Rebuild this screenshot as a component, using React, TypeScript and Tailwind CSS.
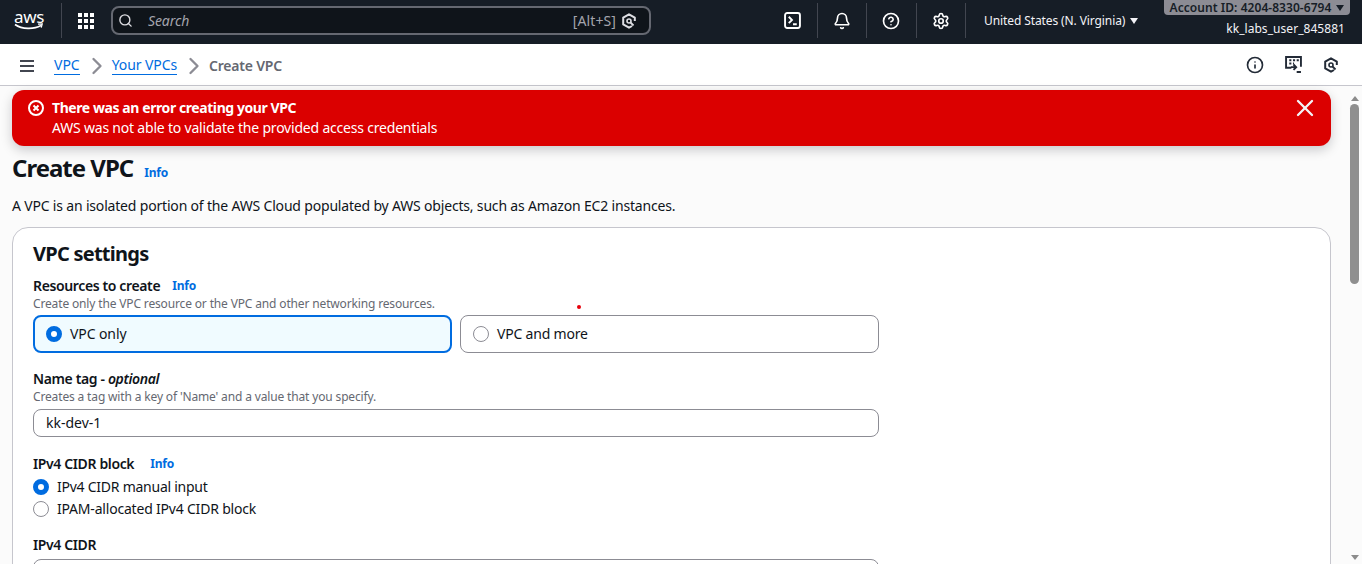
import { Bell, ChevronRight, CircleHelp, Info, Search, Settings, X } from 'lucide-react';

function QIcon({ className }: { className?: string }) {
  return (
    <svg viewBox="0 0 16 16" fill="none" stroke="currentColor" strokeWidth="2" className={className} aria-hidden>
      <path d="M13.8 8V4.6L8 1.3 2.2 4.6v6.8L8 14.7l3-1.7" strokeLinejoin="round" />
      <circle cx="8" cy="8" r="2" strokeWidth="1.6" />
      <path d="M9.5 9.5 12.5 12.5" strokeWidth="1.8" />
    </svg>
  );
}

function InfoLink({ className = '' }: { className?: string }) {
  return <span className={`text-xs font-bold tracking-[-0.2px] text-[#006ce0] ${className}`}>Info</span>;
}

function Radio({ checked = false }: { checked?: boolean }) {
  return checked ? (
    <span className="h-4 w-4 shrink-0 rounded-full border-[5px] border-[#006ce0] bg-white" />
  ) : (
    <span className="h-4 w-4 shrink-0 rounded-full border border-[#8c8c94] bg-white" />
  );
}

function TopIcon({ children, border = true }: { children: React.ReactNode; border?: boolean }) {
  return (
    <div className={`flex h-[35px] w-[49.5px] items-center justify-center ${border ? 'border-r border-[#424650]' : ''}`}>
      {children}
    </div>
  );
}

function TopBar() {
  return (
    <header className="relative flex h-11 shrink-0 items-center bg-[#161d26] pb-[3px] text-white">
      <div className="flex w-[61px] flex-col items-center pr-[3px]">
        <span className="mt-[-2px] text-[17px] leading-[15px] tracking-[-0.3px]">aws</span>
        <svg viewBox="0 0 30 8" className="mt-[-1px] h-2 w-[30px]" fill="none" stroke="white" aria-hidden>
          <path d="M1 1.5c7 5 19 5 26 1" strokeWidth="1.6" />
          <path d="M24 1.2 28.2 1l-1 3.6" strokeWidth="1.3" />
        </svg>
      </div>
      <div className="h-[35px] w-px bg-[#424650]" />
      <div className="ml-4 grid grid-cols-3 gap-[2px]">
        {Array.from({ length: 9 }).map((_, i) => (
          <span key={i} className="h-[4px] w-[4px] bg-white" />
        ))}
      </div>
      <div className="ml-[17px] flex h-[29px] w-[540px] items-center rounded-lg border-2 border-[#656871] bg-[#0f141a] pl-[5px] pr-[12px]">
        <Search className="h-[15px] w-[15px] text-[#dedee3]" strokeWidth={2.2} />
        <span className="ml-[15px] text-sm italic tracking-[-0.1px] text-[#a4a4ad]">Search</span>
        <span className="ml-auto text-sm tracking-[0.1px] text-[#a4a4ad]">[Alt+S]</span>
        <QIcon className="ml-[5px] h-4 w-4 text-[#dedee3]" />
      </div>
      <div className="ml-[117px] flex items-center">
        <TopIcon>
          <svg viewBox="0 0 16 16" className="h-[17px] w-[17px]" fill="none" stroke="white" strokeWidth="1.8" aria-hidden>
            <rect x="1" y="1" width="14" height="14" rx="2" />
            <path d="M4.5 4.5 7.5 7.5l-3 3M8.5 11.5H12" />
          </svg>
        </TopIcon>
        <TopIcon>
          <Bell className="h-[18px] w-[18px]" strokeWidth={2.2} />
        </TopIcon>
        <TopIcon>
          <CircleHelp className="h-[18px] w-[18px]" strokeWidth={2.2} />
        </TopIcon>
        <TopIcon>
          <Settings className="h-[18px] w-[18px]" strokeWidth={2.2} />
        </TopIcon>
      </div>
      <div className="ml-[18px] flex items-center text-xs tracking-[-0.1px] text-[#f3f3f7]">
        <span>United States (N. Virginia)</span>
        <span className="ml-[5px] h-0 w-0 border-x-[4.5px] border-t-[6px] border-x-transparent border-t-[#f3f3f7]" />
      </div>
      <div className="absolute right-[12px] top-0 flex h-[15px] w-[186px] items-center justify-center rounded-b bg-[#8c8c94] pt-px text-xs font-semibold leading-[12px] tracking-[0.05px] text-[#161d26]">
        Account ID: 4204-8330-6794
        <span className="ml-[5px] h-0 w-0 border-x-[4.5px] border-t-[6px] border-x-transparent border-t-[#161d26]" />
      </div>
      <span className="absolute right-[17px] top-[21px] text-xs tracking-[0.05px] text-[#f3f3f7]">kk_labs_user_845881</span>
    </header>
  );
}

function BreadcrumbBar() {
  return (
    <div className="flex h-[42px] shrink-0 items-center border-b border-[#c6c6cd] bg-white pl-5 pr-[23px] pt-[2px]">
      <svg viewBox="0 0 14 12" className="h-3 w-[14px]" fill="#424650" aria-hidden>
        <path d="M0 0h14v2H0zM0 5h14v2H0zM0 10h14v2H0z" />
      </svg>
      <span className="ml-5 border-b border-[#006ce0] text-sm leading-[18px] text-[#006ce0]">VPC</span>
      <ChevronRight className="ml-[3px] mr-[1px] h-7 w-7 text-[#8c8c94]" strokeWidth={2} />
      <span className="border-b border-[#006ce0] text-sm leading-[18px] tracking-[-0.1px] text-[#006ce0]">Your VPCs</span>
      <ChevronRight className="ml-[3px] mr-[1px] h-7 w-7 text-[#8c8c94]" strokeWidth={2} />
      <span className="text-sm font-semibold tracking-[-0.2px] text-[#656871]">Create VPC</span>
      <div className="ml-auto mt-[-2px] flex items-center gap-[21px] text-[#232b37]">
        <Info className="h-[18px] w-[18px]" strokeWidth={2.2} />
        <svg viewBox="0 0 16 16" className="h-[17px] w-[17px]" fill="none" stroke="currentColor" strokeWidth="1.8" aria-hidden>
          <path d="M6 11H1V1h14v9" />
          <path d="M4 4h2M7.5 4h2M11 4h2M4 7h2M7.5 7h1" />
          <path d="M5.5 10.5H10M8 8l2.5 2.5L8 13M11 15h4" />
        </svg>
        <QIcon className="h-4 w-4" />
      </div>
    </div>
  );
}

function ErrorFlash() {
  return (
    <div className="flex h-14 items-start rounded-xl bg-[#db0000] pl-4 pr-3 pt-2 text-sm leading-5 text-white shadow-[0_4px_12px_rgba(0,7,22,0.2)]">
      <svg viewBox="0 0 16 16" className="mt-[2px] h-4 w-4 shrink-0" fill="none" stroke="white" strokeWidth="2" aria-hidden>
        <circle cx="8" cy="8" r="7" />
        <path d="m5.5 5.5 5 5M10.5 5.5l-5 5" />
      </svg>
      <div className="ml-2">
        <div className="font-bold tracking-[-0.42px]">There was an error creating your VPC</div>
        <div className="tracking-[-0.2px]">AWS was not able to validate the provided access credentials</div>
      </div>
      <X className="ml-auto mt-[-4px] h-7 w-7 text-[#f3f3f7]" strokeWidth={2} />
    </div>
  );
}

function Label({ children }: { children: React.ReactNode }) {
  return <div className="text-sm font-semibold leading-5 tracking-[-0.37px] text-[#0f141a]">{children}</div>;
}

function Hint({ children }: { children: React.ReactNode }) {
  return <div className="text-xs leading-4 tracking-[-0.15px] text-[#656871]">{children}</div>;
}

function SettingsCard() {
  return (
    <section className="mt-[11px] h-[400px] rounded-t-2xl border border-[#c6c6cd] bg-white px-5 pt-[14px] text-[#0f141a]">
      <h2 className="text-xl font-bold leading-6 tracking-[-0.75px]">VPC settings</h2>

      <div className="mt-[10px] flex items-center gap-3">
        <Label>Resources to create</Label>
        <InfoLink />
      </div>
      <Hint>Create only the VPC resource or the VPC and other networking resources.</Hint>
      <div className="relative mt-[3px] grid w-[846px] grid-cols-2 gap-2">
        <div className="flex h-[38px] items-center gap-2 rounded-lg border-2 border-[#006ce0] bg-[#f0fbff] pl-[11px] text-sm">
          <Radio checked />
          <span className="tracking-[-0.1px]">VPC only</span>
        </div>
        <div className="flex h-[38px] items-center gap-2 rounded-lg border border-[#8c8c94] pl-[12px] text-sm">
          <Radio />
          <span className="tracking-[-0.2px]">VPC and more</span>
        </div>
        <span className="absolute left-[544px] top-[-10px] h-[4px] w-[4px] rounded-full bg-[#e7000b]" />
      </div>

      <div className="mt-4">
        <Label>
          Name tag - <em>optional</em>
        </Label>
      </div>
      <Hint>Creates a tag with a key of 'Name' and a value that you specify.</Hint>
      <div className="mt-1 flex h-7 w-[846px] items-center rounded-lg border border-[#8c8c94] pl-3 text-sm">kk-dev-1</div>

      <div className="mt-[17px] flex items-center gap-4">
        <Label>IPv4 CIDR block</Label>
        <InfoLink />
      </div>
      <div className="mt-[2px] flex h-[22px] items-center gap-2 text-sm tracking-[-0.25px]">
        <Radio checked />
        <span>IPv4 CIDR manual input</span>
      </div>
      <div className="flex h-[22px] items-center gap-2 text-sm tracking-[-0.2px]">
        <Radio />
        <span>IPAM-allocated IPv4 CIDR block</span>
      </div>

      <div className="mt-[15px]">
        <Label>IPv4 CIDR</Label>
      </div>
      <div className="mt-1 h-7 w-[846px] rounded-lg border border-[#8c8c94]" />
    </section>
  );
}

function Scrollbar() {
  return (
    <div className="flex w-[15px] shrink-0 flex-col items-center bg-[#fbfbfb] pt-[10px]">
      <span className="h-0 w-0 border-x-[4px] border-b-[5px] border-x-transparent border-b-[#8c8c8c]" />
      <span className="mt-[3px] h-[180px] w-[9px] rounded-full bg-[#8f8f8f]" />
      <span className="mt-auto mb-1 h-0 w-0 border-x-[4px] border-t-[5px] border-x-transparent border-t-[#8c8c8c]" />
    </div>
  );
}

export default function App() {
  return (
    <div className="flex h-[564px] w-[1362px] flex-col overflow-hidden bg-[#fbfbfb] font-['Noto_Sans',sans-serif]">
      <TopBar />
      <BreadcrumbBar />
      <div className="flex min-h-0 flex-1">
        <main className="min-w-0 flex-1 pl-3 pr-4 pt-1">
          <ErrorFlash />
          <div className="mt-[6px] flex items-center">
            <h1 className="text-2xl font-bold leading-8 tracking-[-1px] text-[#0f141a]">Create VPC</h1>
            <InfoLink className="ml-[11px] mt-[10px]" />
          </div>
          <p className="mt-[12px] text-sm leading-5 tracking-[-0.18px] text-[#0f141a]">
            A VPC is an isolated portion of the AWS Cloud populated by AWS objects, such as Amazon EC2 instances.
          </p>
          <SettingsCard />
        </main>
        <Scrollbar />
      </div>
    </div>
  );
}
